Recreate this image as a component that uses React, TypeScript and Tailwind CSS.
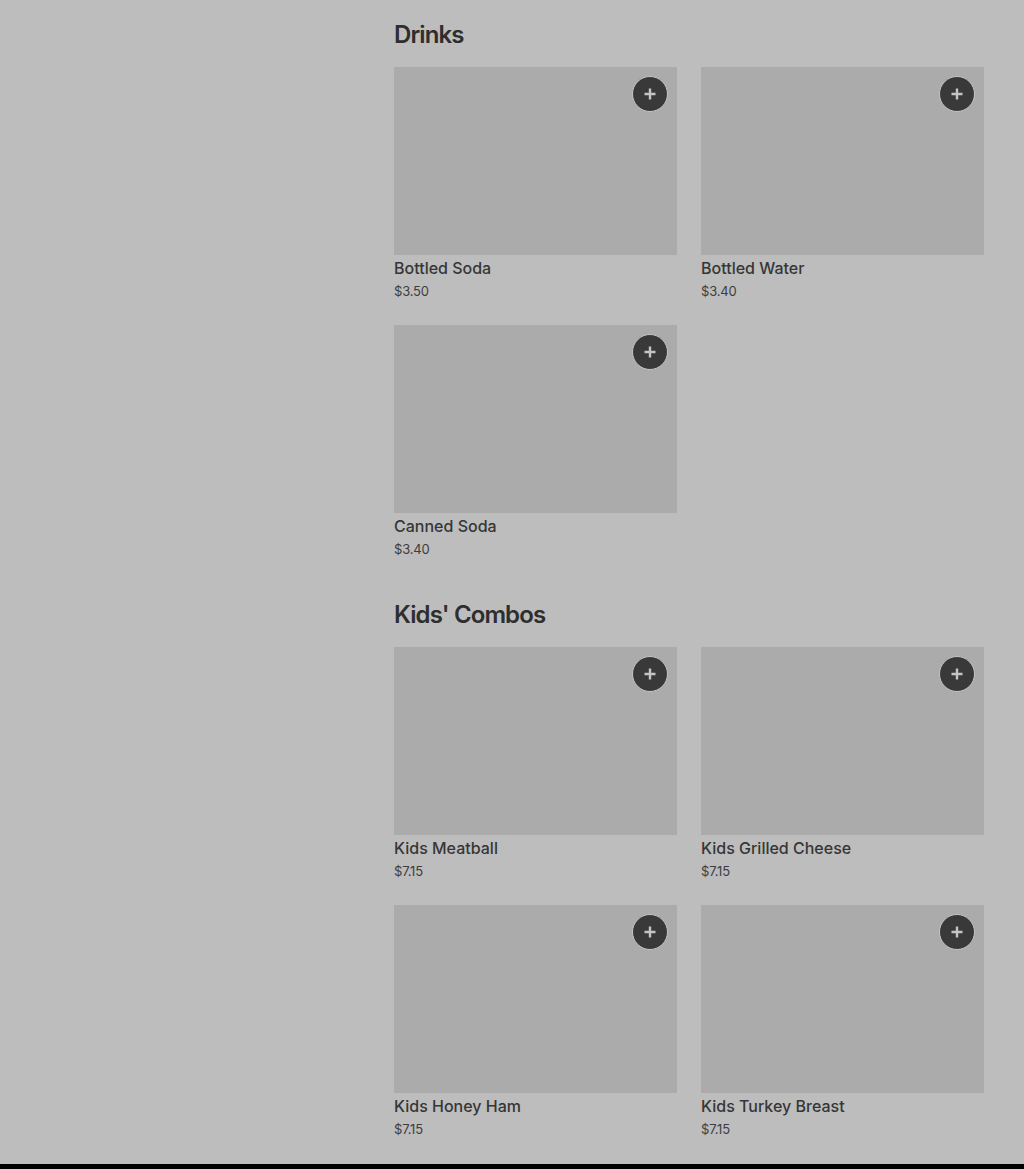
import React from 'react';

interface MenuItem {
  name: string;
  price: string;
}

interface MenuSection {
  title: string;
  items: MenuItem[];
}

const sections: MenuSection[] = [
  {
    title: 'Drinks',
    items: [
      { name: 'Bottled Soda', price: '$3.50' },
      { name: 'Bottled Water', price: '$3.40' },
      { name: 'Canned Soda', price: '$3.40' },
    ],
  },
  {
    title: "Kids' Combos",
    items: [
      { name: 'Kids Meatball', price: '$7.15' },
      { name: 'Kids Grilled Cheese', price: '$7.15' },
      { name: 'Kids Honey Ham', price: '$7.15' },
      { name: 'Kids Turkey Breast', price: '$7.15' },
    ],
  },
];

function PlusIcon() {
  return (
    <svg width="14" height="14" viewBox="0 0 14 14" fill="none">
      <path d="M7 1.5v11M1.5 7h11" stroke="#c4c4c4" strokeWidth="2.4" />
    </svg>
  );
}

function ItemCard({ item }: { item: MenuItem }) {
  return (
    <div>
      <div className="relative h-[188px] bg-[#ababab]">
        <button className="absolute top-[9px] right-[9px] flex items-center justify-center w-9 h-9 rounded-full bg-[#393939] border border-[#c6c6c6]">
          <PlusIcon />
        </button>
      </div>
      <div className="mt-px text-[16px] leading-6 font-medium text-[#363636]">{item.name}</div>
      <div className="mt-px text-[13px] leading-5 tracking-[-0.2px] text-[#3d3d3d]">{item.price}</div>
    </div>
  );
}

export default function App() {
  return (
    <div
      className="min-h-[1169px] flex flex-col bg-[#bdbdbd]"
      style={{ fontFamily: 'Inter, "Noto Sans", sans-serif' }}
    >
      <div className="flex-1 flex">
        <div className="w-[394px] shrink-0" />
        <div className="w-[590px] pt-[19px] pb-[25px] flex flex-col gap-10">
          {sections.map(section => (
            <section key={section.title}>
              <h2 className="text-[24px] leading-8 font-semibold tracking-[-0.9px] text-[#2e2e2e]">
                {section.title}
              </h2>
              <div className="mt-4 grid grid-cols-2 gap-x-6 gap-y-6">
                {section.items.map(item => (
                  <ItemCard key={item.name} item={item} />
                ))}
              </div>
            </section>
          ))}
        </div>
      </div>
      <div className="h-[5px] bg-black" />
    </div>
  );
}
